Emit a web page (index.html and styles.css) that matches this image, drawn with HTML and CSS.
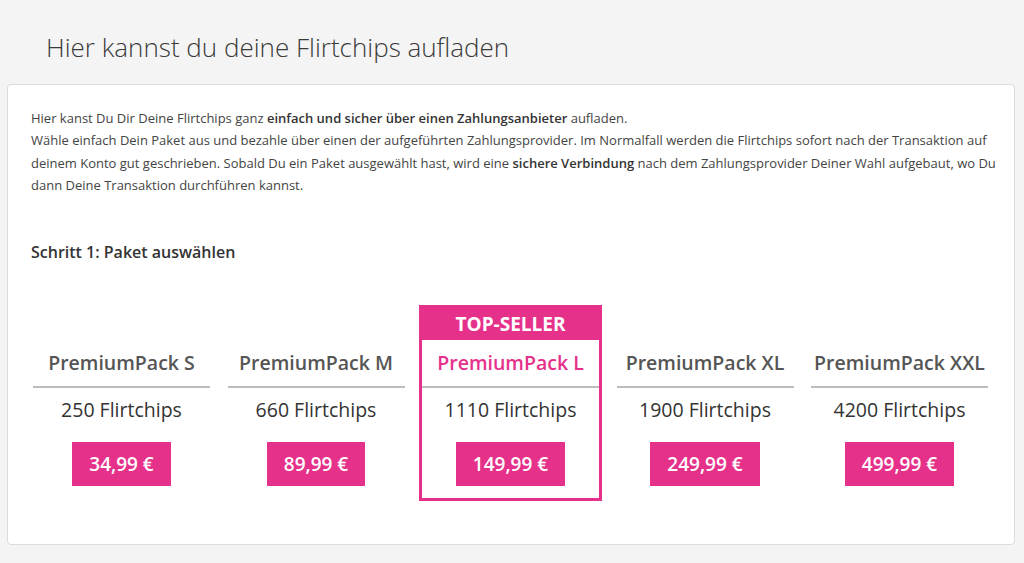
FILE: index.html
```html
<!DOCTYPE html>
<html lang="de">
<head>
<meta charset="utf-8">
<title>Flirtchips aufladen</title>
<link rel="stylesheet" href="styles.css">
</head>
<body>
<h1 class="page-title">Hier kannst du deine Flirtchips aufladen</h1>
<div class="card">
  <p class="intro">Hier kanst Du Dir Deine Flirtchips ganz <b>einfach und sicher über einen Zahlungsanbieter</b> aufladen.<br>Wähle einfach Dein Paket aus und bezahle über einen der aufgeführten Zahlungsprovider. Im Normalfall werden die Flirtchips sofort nach der Transaktion auf<br>deinem Konto gut geschrieben. Sobald Du ein Paket ausgewählt hast, wird eine <b>sichere Verbindung</b> nach dem Zahlungsprovider Deiner Wahl aufgebaut, wo Du<br>dann Deine Transaktion durchführen kannst.</p>
  <h2 class="step">Schritt 1: Paket auswählen</h2>
  <div class="packs">
    <div class="pack">
      <div class="pack-name">PremiumPack S</div>
      <div class="pack-chips">250 Flirtchips</div>
      <span class="price">34,99 €</span>
    </div>
    <div class="pack">
      <div class="pack-name">PremiumPack M</div>
      <div class="pack-chips">660 Flirtchips</div>
      <span class="price">89,99 €</span>
    </div>
    <div class="pack pack-top">
      <div class="pack-badge">TOP-SELLER</div>
      <div class="pack-name">PremiumPack L</div>
      <div class="pack-chips">1110 Flirtchips</div>
      <span class="price">149,99 €</span>
    </div>
    <div class="pack">
      <div class="pack-name">PremiumPack XL</div>
      <div class="pack-chips">1900 Flirtchips</div>
      <span class="price">249,99 €</span>
    </div>
    <div class="pack">
      <div class="pack-name">PremiumPack XXL</div>
      <div class="pack-chips">4200 Flirtchips</div>
      <span class="price">499,99 €</span>
    </div>
  </div>
</div>
</body>
</html>
```

FILE: styles.css
```css
* { box-sizing: border-box; }
html, body { margin: 0; padding: 0; }
body {
  background: #f4f4f4;
  font-family: "Open Sans", "Liberation Sans", sans-serif;
  color: #444;
  height: 563px;
  overflow: hidden;
}
.page-title {
  margin: 0;
  padding: 30px 0 0 46px;
  font-size: 26px;
  line-height: 34px;
  font-weight: 300;
  color: #3a3a3a;
}
.card {
  margin: 20px 9px 0 7px;
  background: #fff;
  border: 1px solid #dcdcdc;
  border-radius: 4px;
  padding: 22px 10px 43px 23px;
}
.intro {
  margin: 0;
  font-size: 13px;
  line-height: 22.4px;
  color: #444;
  white-space: nowrap;
}
.intro b { font-weight: 600; color: #333; }
.step {
  margin: 45px 0 0 0;
  font-size: 16px;
  line-height: 20px;
  font-weight: 600;
  color: #333;
}
.packs {
  display: flex;
  align-items: flex-end;
  gap: 17.5px;
  margin: 43px 0 0 2px;
}
.pack {
  width: 177px;
  flex: 0 0 177px;
  text-align: center;
  padding-bottom: 15px;
}
.pack-name {
  padding: 10px 0;
  font-size: 19.5px;
  line-height: 26px;
  font-weight: 600;
  color: #555;
  border-bottom: 2px solid #bdbdbd;
  white-space: nowrap;
}
.pack-chips {
  padding-top: 9px;
  font-size: 19.5px;
  line-height: 26px;
  color: #333;
}
.price {
  display: inline-block;
  margin-top: 19px;
  height: 44px;
  line-height: 44px;
  padding: 0 17px;
  background: #e6318b;
  color: #fff;
  font-size: 19px;
  font-weight: 600;
}
.pack-top {
  flex: 0 0 183px;
  width: 183px;
  margin: 0 -3px;
  border: 3px solid #e6318b;
  padding-bottom: 12px;
}
.pack-top .pack-name { color: #e6318b; }
.pack-badge {
  background: #e6318b;
  color: #fff;
  font-size: 19px;
  font-weight: 700;
  height: 32px;
  line-height: 32px;
}
```
